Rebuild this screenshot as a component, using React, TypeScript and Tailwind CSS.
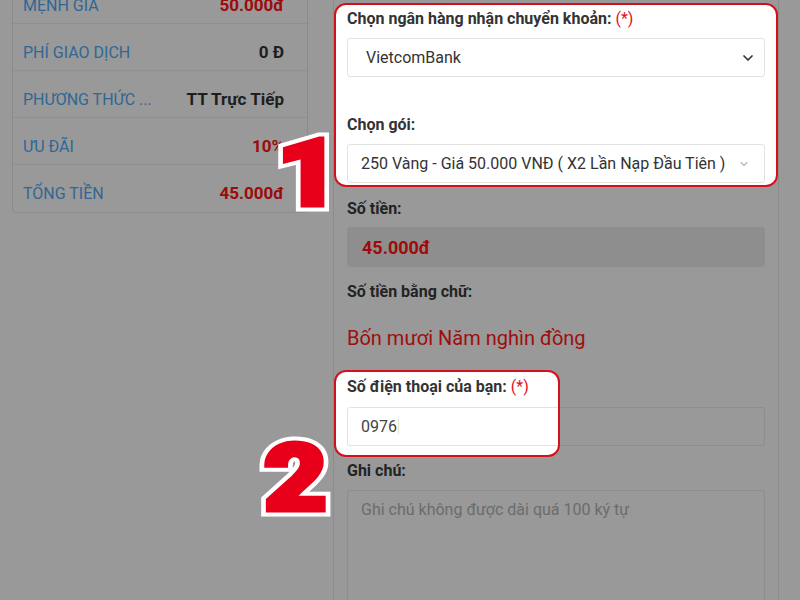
import { ChevronDown } from 'lucide-react';

const rows = [
  { label: 'MỆNH GIÁ', value: '50.000đ', red: true },
  { label: 'PHÍ GIAO DỊCH', value: '0 Đ', red: false },
  { label: 'PHƯƠNG THỨC ...', value: 'TT Trực Tiếp', red: false },
  { label: 'ƯU ĐÃI', value: '10%', red: true },
  { label: 'TỔNG TIỀN', value: '45.000đ', red: true },
];

function Label({ text, required, dim }: { text: string; required?: boolean; dim?: boolean }) {
  return (
    <div className={`h-[20px] text-[16px] leading-[20px] font-bold whitespace-nowrap ${dim ? 'text-[#232323]' : 'text-[#333]'}`}>
      {text}
      {required && <span className="font-normal text-[#e3101c]"> (*)</span>}
    </div>
  );
}

// red digit with a white outline, drawn as two stacked text layers
function BigNumber({ n, className }: { n: string; className: string }) {
  const base = "font-['Roboto',sans-serif] text-[93px] leading-none font-black";
  return (
    <div className={`absolute origin-left scale-x-[1.17] ${className}`}>
      <span className={`${base} block text-white [-webkit-text-stroke:13px_white] [paint-order:stroke_fill]`}>{n}</span>
      <span className={`${base} absolute left-0 top-0 text-[#e8001b] [-webkit-text-stroke:5px_#e8001b] [paint-order:stroke_fill]`}>
        {n}
      </span>
    </div>
  );
}

export default function App() {
  return (
    <div className="relative w-[800px] h-[600px] overflow-hidden bg-[#999999] flex font-['Roboto',sans-serif]">
      {/* order summary */}
      <div className="w-[308px] pl-[12px] shrink-0">
        <div className="-mt-[24px] border border-[#8c8c8c] rounded-[4px]">
          {rows.map((r, i) => (
            <div
              key={r.label}
              className={`h-[47px] flex items-center justify-between gap-3 pl-[10px] pr-[23px] pt-[11px] ${
                i < rows.length - 1 ? 'border-b border-[#8f8f8f]' : ''
              }`}
            >
              <span className="text-[16px] text-[#306795] whitespace-nowrap">{r.label}</span>
              <span className={`text-[17px] font-bold whitespace-nowrap ${r.red ? 'text-[#9c0a0a]' : 'text-[#1e1e1e]'}`}>
                {r.value}
              </span>
            </div>
          ))}
        </div>
      </div>

      {/* form */}
      <div className="ml-[25px] w-[446px] shrink-0 border-x border-[#8c8c8c] pt-[3px]">
        <div className="rounded-[12px] border-2 border-[#d3111d] bg-white px-[11px] pt-[4px] pb-[2px]">
          <Label text="Chọn ngân hàng nhận chuyển khoản:" required />
          <div className="mt-[9px] h-[39px] rounded-[3px] border border-[#e2e2e2] flex items-center justify-between pl-[18px] pr-[8px] text-[16px] text-[#333]">
            <span>VietcomBank</span>
            <ChevronDown size={16} strokeWidth={2.6} className="text-[#333]" />
          </div>
          <div className="mt-[38px]">
            <Label text="Chọn gói:" />
          </div>
          <div className="mt-[9px] h-[39px] rounded-[3px] border border-[#e2e2e2] flex items-center justify-between pl-[13px] pr-[14px] text-[16px] text-[#333]">
            <span>250 Vàng - Giá 50.000 VNĐ ( X2 Lần Nạp Đầu Tiên )</span>
            <ChevronDown size={12} strokeWidth={2.4} className="text-[#b8b8b8]" />
          </div>
        </div>

        <div className="px-[13px]">
          <div className="mt-[12px]">
            <Label text="Số tiền:" dim />
          </div>
          <div className="mt-[8px] h-[40px] rounded-[3px] border border-[#8d8d8d] bg-[#8e8e8e] flex items-center pl-[14px] text-[18px] font-bold text-[#a00a0a]">
            45.000đ
          </div>
          <div className="mt-[15px]">
            <Label text="Số tiền bằng chữ:" dim />
          </div>
          <div className="mt-[22px] h-[28px] text-[20px] leading-[28px] text-[#a00d0d]">Bốn mươi Năm nghìn đồng</div>

          <div className="relative mt-[25px]">
            <Label text="Số điện thoại của bạn:" required dim />
            <div className="mt-[10px] h-[39px] rounded-[3px] border border-[#8d8d8d]" />

            <div className="absolute -left-[13px] -top-[7px] w-[226px] h-[87px] rounded-[12px] border-2 border-[#d3111d] bg-white overflow-hidden pl-[11px] pt-[5px]">
              <Label text="Số điện thoại của bạn:" required />
              <div className="mt-[10px] w-[417px] h-[39px] rounded-[3px] border border-[#e2e2e2] flex items-center pl-[13px] text-[16px] text-[#444]">
                0976<span className="ml-[1px] w-px h-[15px] bg-[#ece3cc]" />
              </div>
            </div>
          </div>

          <div className="mt-[15px]">
            <Label text="Ghi chú:" dim />
          </div>
          <div className="mt-[9px] h-[160px] rounded-[3px] border border-[#8d8d8d] pl-[13px] pt-[7px] text-[16px] leading-[24px] text-[#6c6c6c]">
            Ghi chú không được dài quá 100 ký tự
          </div>
        </div>
      </div>

      <BigNumber n="1" className="left-[277px] top-[127px]" />
      <BigNumber n="2" className="left-[264px] top-[432px]" />
    </div>
  );
}
